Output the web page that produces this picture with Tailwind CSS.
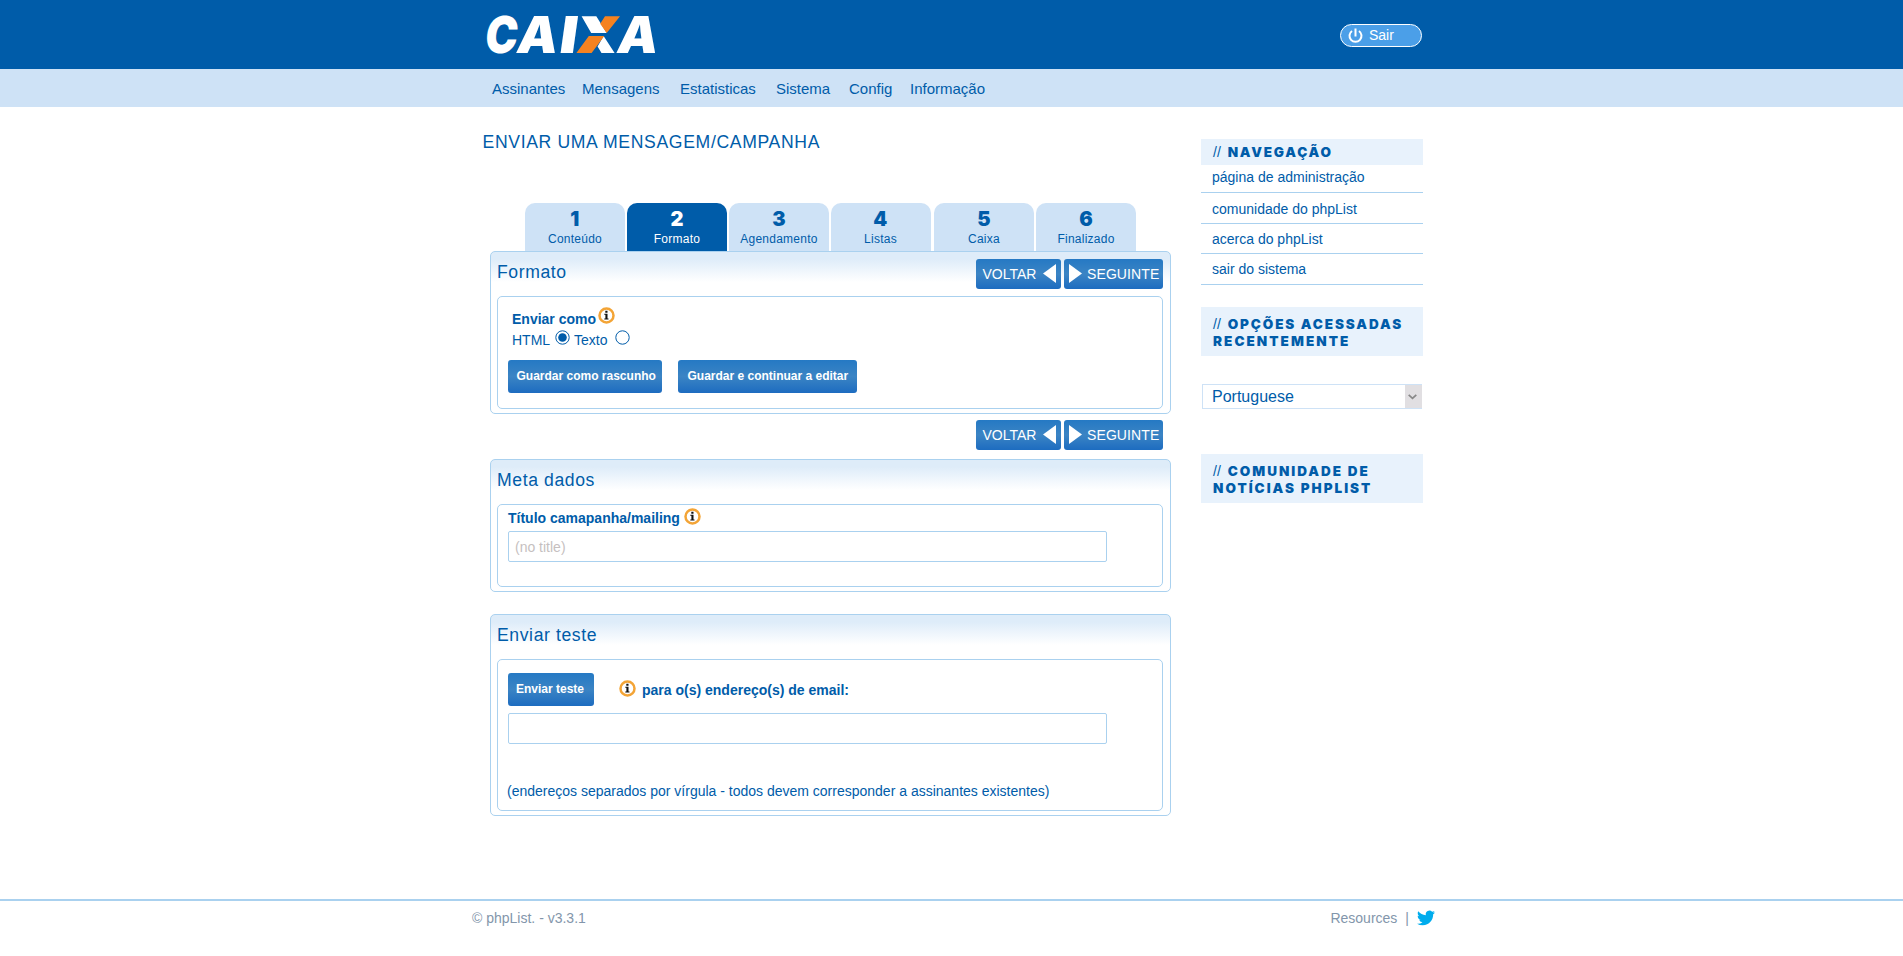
<!DOCTYPE html>
<html lang="pt">
<head>
<meta charset="utf-8">
<title>phpList</title>
<script src="https://cdn.jsdelivr.net/npm/@tailwindcss/browser@4"></script>
</head>
<body class="bg-white font-['Liberation_Sans',Arial,sans-serif] text-sm leading-5 text-[#005ca9] min-h-screen overflow-hidden">
<svg class="hidden">
  <symbol id="info" viewBox="0 0 17 17">
    <circle cx="8.5" cy="8.5" r="7" fill="#fff" stroke="#f3a436" stroke-width="2.5"/>
    <path d="M7.3 3.8h2.2v2H7.3zM6.3 6.8h3.2v4.8h1v1H6.3v-1h1.1V7.8H6.3z" fill="#111"/>
  </symbol>
</svg>

<header class="h-[69px] bg-[#005ca9]">
  <div class="w-[963px] mx-auto flex justify-between pl-[4px] pr-[11px]">
    <svg class="overflow-visible" width="190" height="69" viewBox="474 0 190 69" font-family="Inter, sans-serif" font-weight="900" font-size="50.8" fill="#fff">
      <text transform="translate(483.5 52.8) skewX(-7)" textLength="32.5" lengthAdjust="spacingAndGlyphs">C</text>
      <text transform="translate(515 53) skewX(-9)" textLength="41" lengthAdjust="spacingAndGlyphs">A</text>
      <text transform="translate(557.8 53) skewX(-8)" textLength="18" lengthAdjust="spacingAndGlyphs">I</text>
      <path d="M581.6 16.2h14.7l10.4 16.7h-15.5zM603.6 36l11 17h-13.1l-3.9-6.4z"/>
      <path d="M605 16.2h15l-13.3 16.7-6.5-9.2zM588.8 36h15.5l-12.7 17h-15.2z" fill="#f58220"/>
      <text transform="translate(615.3 53) skewX(-9)" textLength="41" lengthAdjust="spacingAndGlyphs">A</text>
    </svg>
    <a class="mt-6 w-[82px] h-[23px] rounded-full border border-white bg-[#4b9fe8] flex text-white">
      <svg class="ml-[7px] mt-[3px]" width="15" height="16" viewBox="0 0 15 16" fill="none" stroke="#fff" stroke-width="2"><path d="M4 3a6 6 0 1 0 7 0M7.5 0.5v8"/></svg>
      <span class="ml-[6px]">Sair</span>
    </a>
  </div>
</header>

<nav class="h-[38px] bg-[#cee2f6]">
  <div class="w-[963px] mx-auto flex pl-[22px] pt-[10px] text-[15px] leading-5">
    <a class="w-[90px]">Assinantes</a><a class="w-[98px]">Mensagens</a><a class="w-[96px]">Estatisticas</a><a class="w-[73px]">Sistema</a><a class="w-[61px]">Config</a><a>Informação</a>
  </div>
</nav>

<div class="w-[963px] mx-auto flex h-[792px]">
  <main class="w-[731px] pt-[25px]">
    <h1 class="pl-[12.5px] text-[17.6px] leading-5 tracking-[0.65px]">ENVIAR UMA MENSAGEM/CAMPANHA</h1>

    <div class="mt-[51px] ml-[55px] flex gap-[2px] h-12 text-center text-xs tracking-[0.25px] leading-4">
      <div class="w-[100px] pt-1 rounded-t-[10px] bg-[#cee2f6]"><b class="block font-['Inter'] font-black text-xl leading-6">1</b>Conteúdo</div>
      <div class="w-[100px] pt-1 rounded-t-[10px] bg-[#005ca9] text-white"><b class="block font-['Inter'] font-black text-xl leading-6">2</b>Formato</div>
      <div class="w-[100px] pt-1 rounded-t-[10px] bg-[#cee2f6]"><b class="block font-['Inter'] font-black text-xl leading-6">3</b>Agendamento</div>
      <div class="w-[100px] pt-1 rounded-t-[10px] bg-[#cee2f6] pr-px"><b class="block font-['Inter'] font-black text-xl leading-6">4</b>Listas</div>
      <div class="w-[100px] pt-1 rounded-t-[10px] bg-[#cee2f6] ml-px"><b class="block font-['Inter'] font-black text-xl leading-6">5</b>Caixa</div>
      <div class="w-[100px] pt-1 rounded-t-[10px] bg-[#cee2f6]"><b class="block font-['Inter'] font-black text-xl leading-6">6</b>Finalizado</div>
    </div>

    <section class="ml-5 w-[681px] h-[163px] border border-[#aad1ef] rounded-[5px] pl-[6px] pr-[7px] bg-[linear-gradient(#deecf9_0,#deecf9_7px,#fff_30px)]">
      <div class="h-11 flex justify-between">
        <h2 class="mt-[10px] text-[17.6px] leading-5 tracking-[0.6px]">Formato</h2>
        <div class="mt-[7px] flex gap-[3px] text-white">
          <a class="w-[85px] h-[30px] rounded-[3px] bg-[linear-gradient(#2579c4,#3b84c4_50%,#1d6cc0)] flex pl-[6.5px] pt-[5px]"><span class="w-[60.5px]">VOLTAR</span><svg width="13" height="19" viewBox="0 0 13 19" fill="#fff"><path d="M13 0v19L0 9.5z"/></svg></a>
          <a class="w-[99px] h-[30px] rounded-[3px] bg-[linear-gradient(#2579c4,#3b84c4_50%,#1d6cc0)] flex pl-[5px] pt-[5px]"><svg width="13" height="19" viewBox="0 0 13 19" fill="#fff"><path d="M0 0v19l13-9.5z"/></svg><span class="ml-[5px] tracking-[0.1px]">SEGUINTE</span></a>
        </div>
      </div>
      <div class="h-[113px] border border-[#aad1ef] rounded-[5px] bg-white pl-[10px] pt-3">
        <div class="pl-1 flex h-5 font-bold">Enviar como<svg class="ml-[2px] -mt-[2px]" width="17" height="17"><use href="#info"/></svg></div>
        <div class="mt-px pl-1 flex h-5">
          <span class="w-[43px]">HTML</span>
          <svg width="15" height="15" viewBox="0 0 15 15"><circle cx="7.5" cy="7.5" r="6.7" fill="#fff" stroke="#005ca9"/><circle cx="7.5" cy="7.5" r="4.3" fill="#005ca9"/></svg>
          <span class="ml-[4px] w-[41px]">Texto</span>
          <svg width="15" height="15" viewBox="0 0 15 15"><circle cx="7.5" cy="7.5" r="6.7" fill="#fff" stroke="#005ca9"/></svg>
        </div>
        <div class="mt-[10px] flex gap-4 text-white text-xs font-bold leading-4">
          <a class="w-[154px] h-[33px] rounded-[3px] bg-[linear-gradient(#2579c4,#3b84c4_50%,#1d6cc0)] pl-[8.5px] pt-2 whitespace-nowrap">Guardar como rascunho</a>
          <a class="w-[179px] h-[33px] rounded-[3px] bg-[linear-gradient(#2579c4,#3b84c4_50%,#1d6cc0)] pl-[9.5px] pt-2 whitespace-nowrap">Guardar e continuar a editar</a>
        </div>
      </div>
    </section>

    <div class="mt-[6px] mr-[38px] flex justify-end gap-[3px] text-white">
      <a class="w-[85px] h-[30px] rounded-[3px] bg-[linear-gradient(#2579c4,#3b84c4_50%,#1d6cc0)] flex pl-[6.5px] pt-[5px]"><span class="w-[60.5px]">VOLTAR</span><svg width="13" height="19" viewBox="0 0 13 19" fill="#fff"><path d="M13 0v19L0 9.5z"/></svg></a>
      <a class="w-[99px] h-[30px] rounded-[3px] bg-[linear-gradient(#2579c4,#3b84c4_50%,#1d6cc0)] flex pl-[5px] pt-[5px]"><svg width="13" height="19" viewBox="0 0 13 19" fill="#fff"><path d="M0 0v19l13-9.5z"/></svg><span class="ml-[5px] tracking-[0.1px]">SEGUINTE</span></a>
    </div>

    <section class="mt-[9px] ml-5 w-[681px] h-[133px] border border-[#aad1ef] rounded-[5px] pl-[6px] pr-[7px] bg-[linear-gradient(#deecf9_0,#deecf9_7px,#fff_30px)]">
      <h2 class="h-11 pt-[10px] text-[17.6px] leading-5 tracking-[0.6px]">Meta dados</h2>
      <div class="h-[83px] border border-[#aad1ef] rounded-[5px] bg-white pl-[10px] pt-[3px]">
        <div class="flex h-[23px] font-bold">Título camapanha/mailing<svg class="ml-[4px]" width="17" height="17"><use href="#info"/></svg></div>
        <input class="block w-[599px] h-[31px] border border-[#aad1ef] rounded-[2px] px-[6px] placeholder:text-[#c6bfbf]" placeholder="(no title)">
      </div>
    </section>

    <section class="mt-[22px] ml-5 w-[681px] h-[202px] border border-[#aad1ef] rounded-[5px] pl-[6px] pr-[7px] bg-[linear-gradient(#deecf9_0,#deecf9_7px,#fff_30px)]">
      <h2 class="h-11 pt-[10px] text-[17.6px] leading-5 tracking-[0.6px]">Enviar teste</h2>
      <div class="h-[152px] border border-[#aad1ef] rounded-[5px] bg-white pl-[10px] pt-[13px]">
        <div class="flex h-10 font-bold">
          <a class="w-[86px] h-[33px] rounded-[3px] bg-[linear-gradient(#2579c4,#3b84c4_50%,#1d6cc0)] pl-2 pt-2 text-white text-xs leading-4">Enviar teste</a>
          <svg class="ml-[25px] mt-[7px]" width="17" height="17"><use href="#info"/></svg>
          <span class="ml-[6px] mt-[7px]">para o(s) endereço(s) de email:</span>
        </div>
        <input class="block w-[599px] h-[31px] border border-[#aad1ef] rounded-[2px] px-[6px]">
        <p class="mt-[37px] -ml-px">(endereços separados por vírgula - todos devem corresponder a assinantes existentes)</p>
      </div>
    </section>
  </main>

  <aside class="w-[222px] pt-8">
    <h3 class="h-[26px] bg-[#e8f2fc] pl-3 pt-[5px] font-['Inter'] font-black text-[13.5px] leading-[17px] tracking-[1.8px]"><span class="font-['Liberation_Sans'] font-normal text-sm leading-[17px] tracking-normal mr-[3px]">// </span>NAVEGAÇÃO</h3>
    <ul>
      <li class="h-7 pt-[2px] pl-[11px] border-b border-[#aad1ef]">página de administração</li>
      <li class="h-[31px] pt-[6px] pl-[11px] border-b border-[#aad1ef]">comunidade do phpList</li>
      <li class="h-[30px] pt-[5px] pl-[11px] border-b border-[#aad1ef]">acerca do phpList</li>
      <li class="h-[31px] pt-[5px] pl-[11px] border-b border-[#aad1ef]">sair do sistema</li>
    </ul>
    <h3 class="mt-[22px] h-[49px] bg-[#e8f2fc] pl-3 pt-[9px] font-['Inter'] font-black text-[13.5px] leading-[17px] tracking-[1.9px] whitespace-nowrap"><span class="font-['Liberation_Sans'] font-normal text-sm leading-[17px] tracking-normal mr-[3px]">// </span>OPÇÕES ACESSADAS<br><span class="tracking-[2.05px]">RECENTEMENTE</span></h3>
    <div class="mt-7 ml-px w-[220px] h-[25px] border border-[#cee2f6] border-r-0 flex justify-between text-base leading-[23px] pl-[9px]">Portuguese
      <span class="w-[17px] bg-[#e1dfe2] flex items-center justify-center"><svg class="mr-[2px]" width="9" height="6" viewBox="0 0 9 6" fill="none" stroke="#888" stroke-width="1.7"><path d="M.7.8l3.8 3.6L8.3.8"/></svg></span>
    </div>
    <h3 class="mt-[45px] h-[49px] bg-[#e8f2fc] pl-3 pt-[9px] font-['Inter'] font-black text-[13.5px] leading-[17px] tracking-[2px] whitespace-nowrap"><span class="font-['Liberation_Sans'] font-normal text-sm leading-[17px] tracking-normal mr-[3px]">// </span>COMUNIDADE DE<br>NOTÍCIAS PHPLIST</h3>
  </aside>
</div>

<footer class="border-t-2 border-[#aad1ef] text-[#8396ab]">
  <div class="w-[963px] mx-auto flex pt-[7px] pl-[2px]">
    <span>© phpList. - v3.3.1</span>
    <span class="ml-auto mr-[8px]">Resources</span>
    <span>|</span>
    <svg class="ml-[8px] -mr-[2px]" width="18" height="20" viewBox="0 0 24 26" fill="#00aced"><path transform="translate(0 1)" d="M23.953 4.57a10 10 0 01-2.825.775 4.958 4.958 0 002.163-2.723c-.951.555-2.005.959-3.127 1.184a4.92 4.92 0 00-8.384 4.482C7.69 8.095 4.067 6.13 1.64 3.162a4.822 4.822 0 00-.666 2.475c0 1.71.87 3.213 2.188 4.096a4.904 4.904 0 01-2.228-.616v.06a4.923 4.923 0 003.946 4.827 4.996 4.996 0 01-2.212.085 4.936 4.936 0 004.604 3.417 9.867 9.867 0 01-6.102 2.105c-.39 0-.779-.023-1.17-.067a13.995 13.995 0 007.557 2.209c9.053 0 13.998-7.496 13.998-13.985 0-.21 0-.42-.015-.63A9.935 9.935 0 0024 4.59z"/></svg>
  </div>
</footer>
</body>
</html>
